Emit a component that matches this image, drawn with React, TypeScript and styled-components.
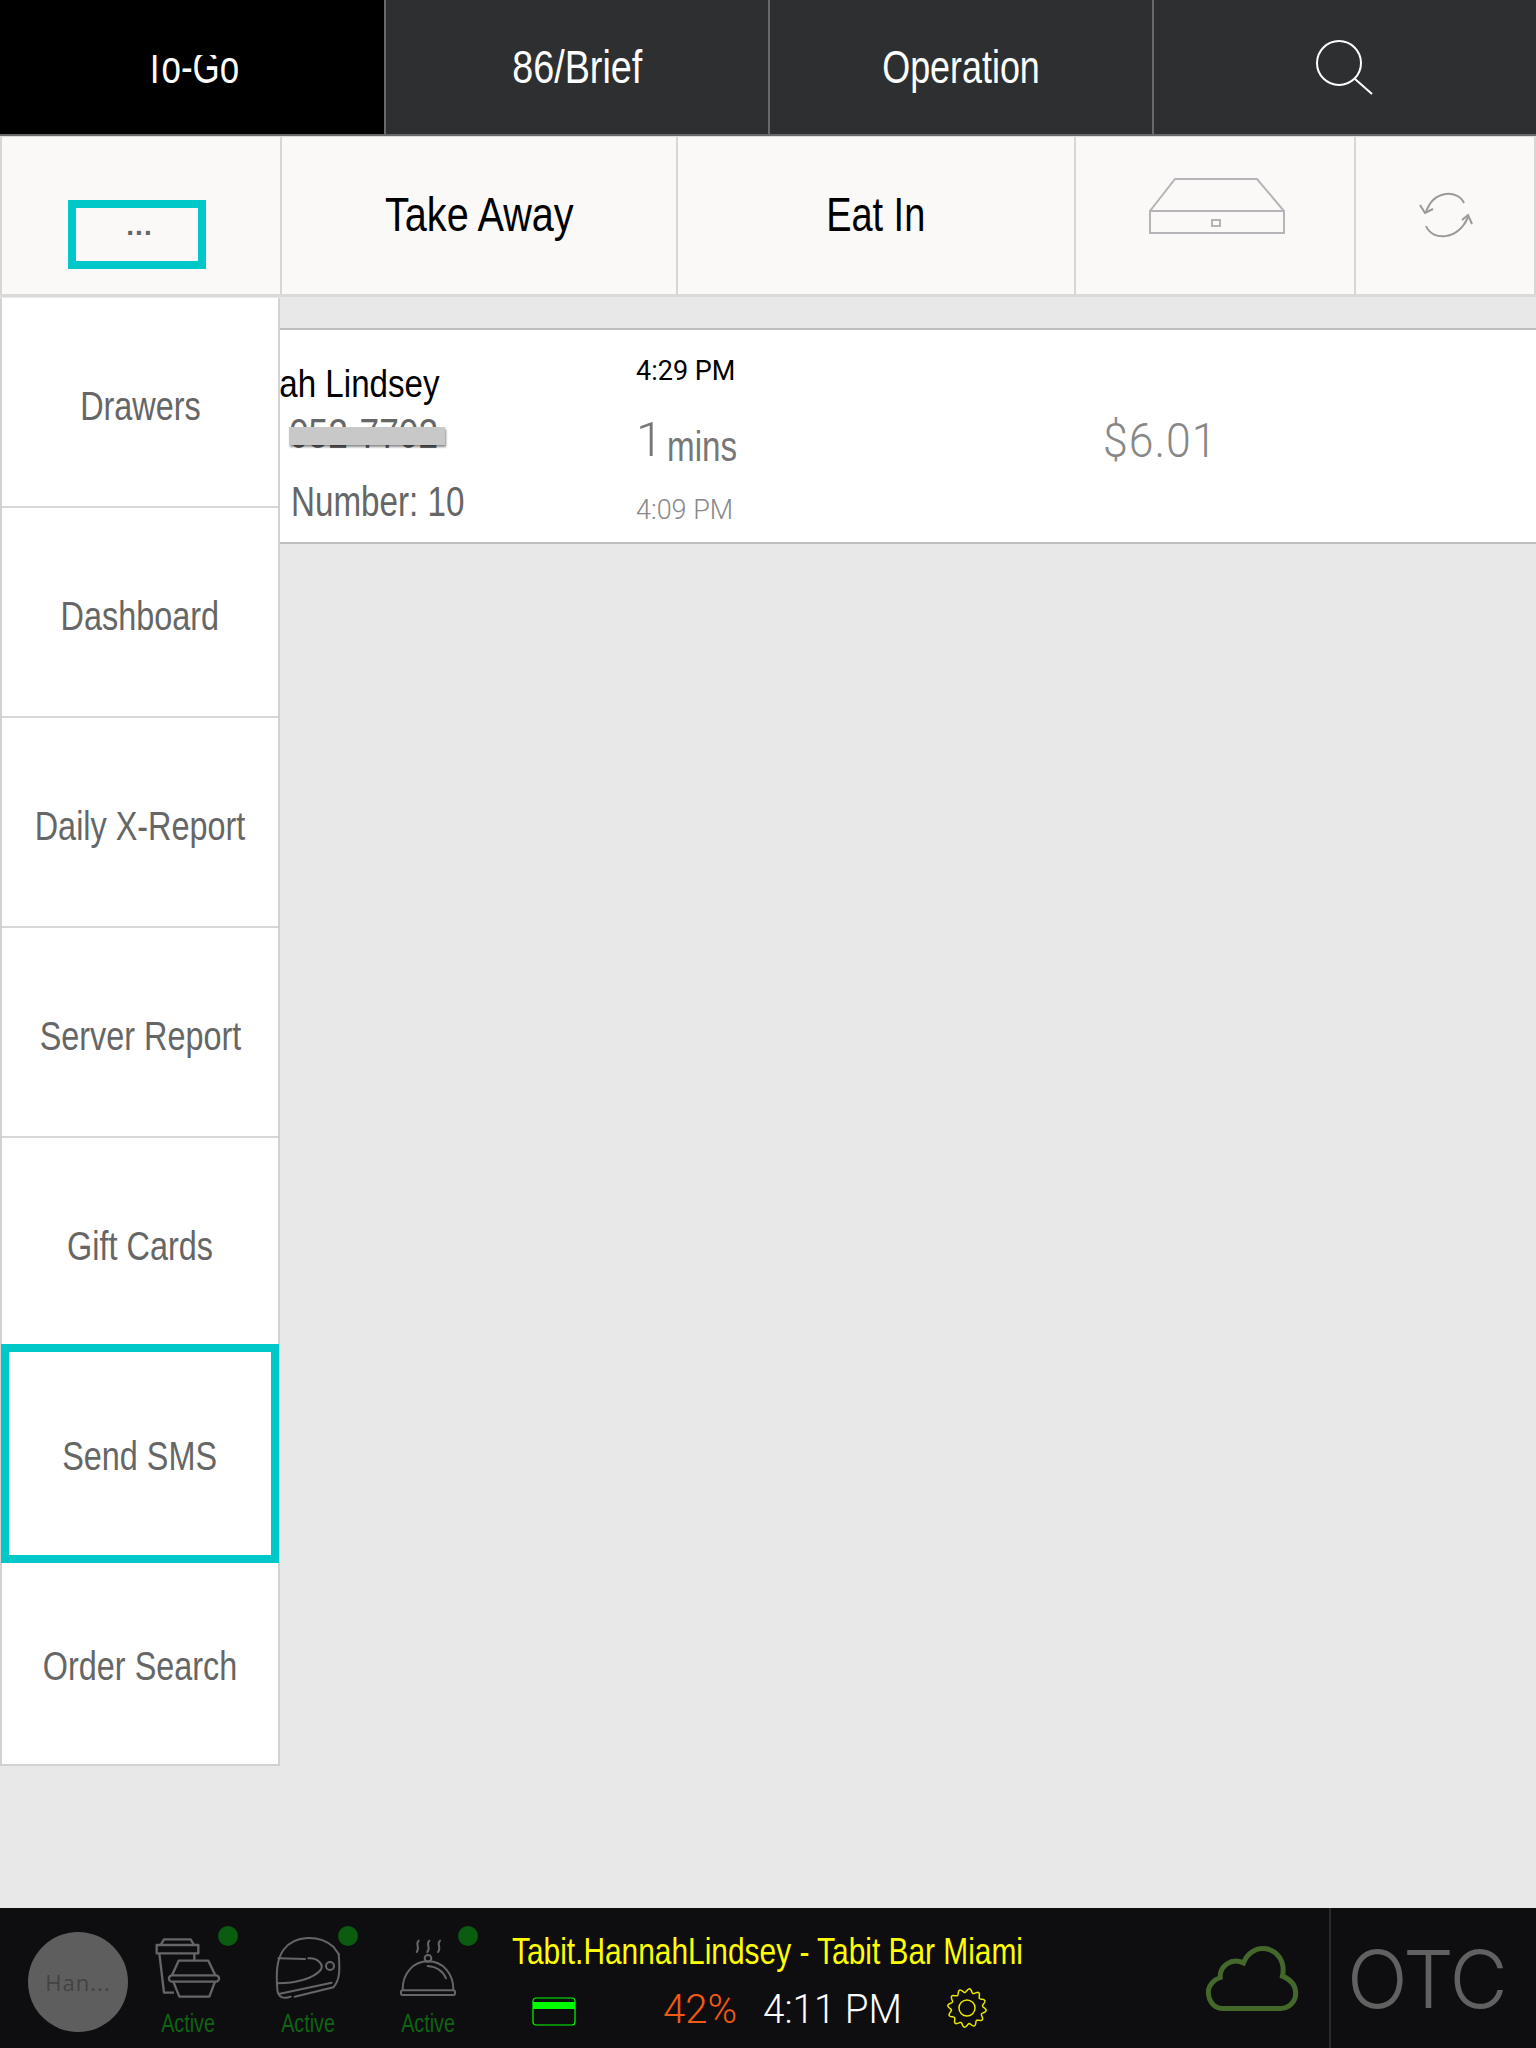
import React from "react";
import styled, { createGlobalStyle } from "styled-components";

const GlobalStyle = createGlobalStyle`
  html, body {
    margin: 0;
    padding: 0;
    background: #e8e8e8;
  }
`;

const Page = styled.div`
  width: 1536px;
  height: 2048px;
  display: flex;
  flex-direction: column;
  overflow: hidden;
  font-family: "Liberation Sans", Arial, sans-serif;
`;

// the reference uses a condensed face, so regular type gets squeezed
const Squeeze = styled.span<{ $sx?: number; $origin?: string; $clipTop?: number }>`
  display: inline-block;
  white-space: nowrap;
  transform: scaleX(${({ $sx }) => $sx ?? 0.79});
  transform-origin: ${({ $origin }) => $origin ?? "center"};
  ${({ $clipTop }) => ($clipTop ? `clip-path: inset(${$clipTop}px -4px 0 -4px);` : "")}
`;

const TopNav = styled.nav`
  height: 136px;
  flex: none;
  box-sizing: border-box;
  display: grid;
  grid-template-columns: 386px 384px 384px 382px;
  border-bottom: 2px solid #696969;
  background: #2e2f31;
`;

const NavTab = styled.div<{ $active?: boolean }>`
  display: flex;
  align-items: center;
  justify-content: center;
  box-sizing: border-box;
  border-right: 2px solid #696969;
  background: ${({ $active }) => ($active ? "#000" : "#2e2f31")};
  color: #fff;
  font-size: 46px;
  &:last-child {
    border-right: none;
  }
`;

const SearchSvg = styled.svg`
  margin-top: 4px;
`;

const Toolbar = styled.div`
  height: 161px;
  flex: none;
  box-sizing: border-box;
  display: grid;
  grid-template-columns: 282px 396px 398px 280px 180px;
  border-top: 1px solid #dcdcdc;
  border-bottom: 3px solid #dadada;
  background: #faf9f7;
`;

const ToolCell = styled.div`
  display: flex;
  align-items: center;
  justify-content: center;
  box-sizing: border-box;
  border-right: 2px solid #d6d6d6;
  padding-bottom: 2px;
  color: #000;
  font-size: 48px;
  &:first-child {
    border-left: 2px solid #d6d6d6;
    padding-bottom: 0;
  }
  &:last-child {
    border-right: 2px solid #d6d6d6;
  }
`;

const MoreBox = styled.div`
  width: 138px;
  height: 69px;
  margin: 38px 9px 0 0;
  box-sizing: border-box;
  border: 8px solid #00c8c8;
  display: flex;
  justify-content: center;
  color: #666;
  font-size: 28px;
  font-weight: bold;
  line-height: 28px;
  padding: 4px 0 0 6px;
  letter-spacing: 1px;
`;

const DrawerSvg = styled.svg`
  margin: 0 0 18px 4px;
`;

const RefreshSvg = styled.svg`
  margin-left: 2px;
`;

const Body = styled.main`
  position: relative;
  flex: 1;
  background: #e8e8e8;
  padding-top: 31px;
`;

const SideMenu = styled.aside`
  position: absolute;
  left: 0;
  top: 1px;
  width: 280px;
  box-sizing: border-box;
  border: 2px solid #d2d2d2;
  border-top: none;
  background: #fff;
`;

const MenuItem = styled.div<{ $active?: boolean }>`
  position: relative;
  height: 210px;
  box-sizing: border-box;
  display: flex;
  align-items: center;
  justify-content: center;
  padding-top: 8px;
  border-bottom: 2px solid ${({ $active }) => ($active ? "transparent" : "#d8d8d8")};
  color: #666;
  font-size: 40px;
  &:last-child {
    height: 206px;
    padding-top: 10px;
    border-bottom: none;
  }
  ${({ $active }) =>
    $active
      ? `&::after {
          content: "";
          position: absolute;
          left: -1px;
          right: -1px;
          top: -4px;
          bottom: -7px;
          border: 8px solid #00c8c8;
        }`
      : ""}
`;

const OrderRow = styled.section`
  height: 216px;
  box-sizing: border-box;
  display: flex;
  background: #fff;
  border-top: 2px solid #bdbdbd;
  border-bottom: 2px solid #bdbdbd;
`;

const CustomerCol = styled.div`
  width: 636px;
  flex: none;
  padding: 30px 0 0 200px;
  box-sizing: border-box;
`;

const CustomerName = styled.div`
  font-size: 39px;
  line-height: 48px;
  color: #000;
`;

const Phone = styled.div`
  position: relative;
  width: 156px;
  margin: 2px 0 0 89px;
  font-size: 42px;
  line-height: 48px;
  color: #666;
`;

const Redaction = styled.div`
  position: absolute;
  left: 0;
  right: 0;
  top: 17px;
  height: 18px;
  background: #c8c8c8;
  box-shadow: 1px 2px 2px rgba(0, 0, 0, 0.45);
`;

const TableNumber = styled.div`
  margin: 20px 0 0 91px;
  font-size: 42px;
  line-height: 48px;
  color: #666;
`;

const TimeCol = styled.div`
  width: 467px;
  flex: none;
  padding-top: 24px;
  font-family: Roboto, "Liberation Sans", sans-serif;
`;

const TimeLine = styled.div<{ $muted?: boolean }>`
  font-size: 27px;
  line-height: 34px;
  color: ${({ $muted }) => ($muted ? "#888" : "#000")};
  font-weight: ${({ $muted }) => ($muted ? 300 : 400)};
`;

const Elapsed = styled.div`
  display: flex;
  align-items: flex-start;
  margin-top: 27px;
  height: 78px;
  color: #777;
`;

const ElapsedNum = styled.span`
  width: 31px;
  font-size: 49px;
  line-height: 50px;
  font-weight: 300;
`;

const ElapsedUnit = styled.span`
  margin-top: 7px;
  font-family: "Liberation Sans", sans-serif;
  font-size: 42px;
  line-height: 50px;
`;

const Price = styled.div`
  padding-top: 84px;
  font-family: Roboto, "Liberation Sans", sans-serif;
  font-size: 48px;
  line-height: 54px;
  font-weight: 300;
  letter-spacing: 1px;
  color: #888;
`;

const BottomBar = styled.footer`
  height: 140px;
  flex: none;
  display: flex;
  background: #0e0d10;
  padding-left: 28px;
`;

const Avatar = styled.div`
  width: 100px;
  height: 100px;
  margin-top: 24px;
  flex: none;
  border-radius: 50%;
  background: #5e5e5e;
  color: #434343;
  font-family: "Open Sans", sans-serif;
  font-size: 22px;
  display: flex;
  align-items: center;
  justify-content: center;
  letter-spacing: 1px;
`;

const StatusItem = styled.div`
  position: relative;
  width: 120px;
  flex: none;
  box-sizing: border-box;
  padding-top: 27px;
  display: flex;
  flex-direction: column;
  align-items: center;
`;

const StatusDot = styled.span`
  position: absolute;
  left: 90px;
  top: 18px;
  width: 20px;
  height: 20px;
  border-radius: 50%;
  background: #0b5c0e;
`;

const StatusLabel = styled.div`
  margin-top: 9px;
  color: #0f6312;
  font-size: 25px;
  line-height: 30px;
`;

const Info = styled.div`
  margin-left: 24px;
  padding-top: 26px;
  width: 600px;
  flex: none;
`;

const UserLine = styled.div`
  color: #ffff00;
  font-size: 36px;
  line-height: 36px;
`;

const Meta = styled.div`
  display: flex;
  align-items: center;
  margin-top: 21px;
  height: 42px;
  padding-left: 20px;
  font-family: Roboto, "Liberation Sans", sans-serif;
  font-weight: 300;
  font-size: 40px;
`;

const Battery = styled.span`
  margin-left: 87px;
  width: 100px;
  padding-bottom: 5px;
  color: #f15a14;
`;

const Clock = styled.span`
  width: 184px;
  padding-bottom: 5px;
  color: #fff;
`;

const GearSvg = styled.svg`
  margin-top: -8px;
`;

const RightSide = styled.div`
  margin-left: auto;
  display: flex;
`;

const CloudWrap = styled.div`
  width: 123px;
  padding-top: 37px;
  box-sizing: border-box;
`;

const OtcBox = styled.div`
  width: 207px;
  box-sizing: border-box;
  border-left: 2px solid #2a2a2d;
  padding: 26px 0 0 16px;
  color: #616161;
  font-family: Inter, "Liberation Sans", sans-serif;
  font-weight: 300;
  font-size: 80px;
  line-height: 90px;
  letter-spacing: -2px;
`;

const menuItems = [
  "Drawers",
  "Dashboard",
  "Daily X-Report",
  "Server Report",
  "Gift Cards",
  "Send SMS",
  "Order Search",
];

const SearchIcon = () => (
  <SearchSvg width="58" height="58" viewBox="0 0 58 58" fill="none" stroke="#fff" strokeWidth="2">
    <circle cx="23" cy="23" r="22" />
    <path d="M39 39 L56 54" />
  </SearchSvg>
);

const DrawerIcon = () => (
  <DrawerSvg width="136" height="56" viewBox="0 0 136 56" fill="none" stroke="#b5b3b7" strokeWidth="2">
    <path d="M1 33 L26 1 H108 L135 33 Z" />
    <rect x="1" y="33" width="134" height="22" />
    <rect x="63" y="42" width="8" height="6" />
  </DrawerSvg>
);

const RefreshIcon = () => (
  <RefreshSvg width="56" height="48" viewBox="0 0 56 48" fill="none" stroke="#999" strokeWidth="2">
    <path d="M46 12 C40 -1 16 -2 8 21" />
    <path d="M2 14 L7 22 L15 18" />
    <path d="M8 35 C14 50 40 50 50 26" />
    <path d="M44 29 L50 24 L54 33" />
  </RefreshSvg>
);

const BagIcon = () => (
  <svg width="66" height="64" viewBox="465 135 198 192" fill="none" stroke="#666" strokeWidth="7" strokeLinejoin="round">
    <path d="M482 165 L492 148 H572 L582 165" />
    <rect x="470" y="165" width="125" height="25" />
    <path d="M478 190 L492 308 H522 M583 190 V210" />
    <path d="M516 256 L536 212 H625 L646 256" />
    <rect x="507" y="256" width="150" height="19" rx="9" />
    <path d="M520 275 L538 320 H628 L645 275" />
  </svg>
);

const HelmetIcon = () => (
  <svg width="66" height="64" viewBox="825 135 198 192" fill="none" stroke="#666" strokeWidth="6" strokeLinecap="round">
    <path d="M1016 192 L1000 170 C960 135 885 132 850 180 C830 210 828 245 832 300 C835 322 850 328 872 320" />
    <path d="M1016 192 C1020 240 1020 270 1000 292 L884 320" />
    <path d="M835 205 L915 207" />
    <path d="M925 205 C955 203 972 225 962 240 C940 265 890 280 832 280" />
    <path d="M836 312 L995 278" />
    <circle cx="990" cy="228" r="12" />
  </svg>
);

const ClocheIcon = () => (
  <svg width="66" height="64" viewBox="1185 135 198 192" fill="none" stroke="#666" strokeWidth="6" strokeLinecap="round">
    <path d="M1256 152 C1244 162 1262 174 1250 186" />
    <path d="M1288 152 C1276 162 1294 174 1282 186" />
    <path d="M1320 152 C1308 162 1326 174 1314 186" />
    <circle cx="1284" cy="205" r="10" />
    <path d="M1208 298 C1208 250 1240 214 1284 214 C1328 214 1360 250 1360 298" />
    <rect x="1203" y="301" width="162" height="14" rx="5" />
    <path d="M1283 228 C1310 230 1330 245 1338 265" />
  </svg>
);

const CardIcon = () => (
  <svg width="44" height="30" viewBox="0 0 44 30" fill="none">
    <rect x="1" y="1" width="42" height="27" rx="3" stroke="#00ff00" strokeWidth="1.2" />
    <rect x="1" y="5" width="42" height="7" fill="#00ff00" />
  </svg>
);

// wavy outline: twelve soft teeth round the ring
const gearPath = () => {
  const points: string[] = [];
  for (let i = 0; i < 240; i++) {
    const a = (i / 240) * Math.PI * 2;
    const r = 17.5 + 1.8 * Math.sin(a * 12);
    points.push(`${(20 + r * Math.cos(a)).toFixed(2)},${(20 + r * Math.sin(a)).toFixed(2)}`);
  }
  return `M${points.join(" L")} Z`;
};

const GearIcon = () => (
  <GearSvg width="40" height="40" viewBox="0 0 40 40" fill="none" stroke="#e8e800" strokeWidth="1.5">
    <path d={gearPath()} />
    <circle cx="20" cy="20" r="8" />
  </GearSvg>
);

const CloudIcon = () => (
  <svg width="93" height="67" viewBox="165 165 280 200" fill="none" stroke="#44682a" strokeWidth="15">
    <path d="M215 355 C185 355 172 328 172 305 C172 285 190 268 208 262 C205 230 240 200 278 218 C290 185 320 172 340 175 C380 178 405 215 395 258 C420 268 435 285 435 310 C435 335 415 355 390 355 Z" />
  </svg>
);

const statusIcons = [<BagIcon key="bag" />, <HelmetIcon key="helmet" />, <ClocheIcon key="cloche" />];

const App = () => {
  return (
    <Page>
      <GlobalStyle />
      <TopNav>
        <NavTab $active>
          <Squeeze $sx={0.76} $clipTop={15}>To-Go</Squeeze>
        </NavTab>
        <NavTab>
          <Squeeze $sx={0.82}>86/Brief</Squeeze>
        </NavTab>
        <NavTab>
          <Squeeze $sx={0.78}>Operation</Squeeze>
        </NavTab>
        <NavTab>
          <SearchIcon />
        </NavTab>
      </TopNav>
      <Toolbar>
        <ToolCell>
          <MoreBox>...</MoreBox>
        </ToolCell>
        <ToolCell>
          <Squeeze $sx={0.825}>Take Away</Squeeze>
        </ToolCell>
        <ToolCell>
          <Squeeze>Eat In</Squeeze>
        </ToolCell>
        <ToolCell>
          <DrawerIcon />
        </ToolCell>
        <ToolCell>
          <RefreshIcon />
        </ToolCell>
      </Toolbar>
      <Body>
        <OrderRow>
          <CustomerCol>
            <CustomerName>
              <Squeeze $sx={0.85} $origin="left">Hannah Lindsey</Squeeze>
            </CustomerName>
            <Phone>
              <Squeeze $sx={0.84} $origin="left">052-7702</Squeeze>
              <Redaction />
            </Phone>
            <TableNumber>
              <Squeeze $origin="left">Number: 10</Squeeze>
            </TableNumber>
          </CustomerCol>
          <TimeCol>
            <TimeLine>4:29 PM</TimeLine>
            <Elapsed>
              <ElapsedNum>1</ElapsedNum>
              <ElapsedUnit>
                <Squeeze $origin="left">mins</Squeeze>
              </ElapsedUnit>
            </Elapsed>
            <TimeLine $muted>4:09 PM</TimeLine>
          </TimeCol>
          <Price>
            <Squeeze $sx={0.93} $origin="left">$6.01</Squeeze>
          </Price>
        </OrderRow>
        <SideMenu>
          {menuItems.map((item) => (
            <MenuItem key={item} $active={item === "Send SMS"}>
              <Squeeze $sx={0.81}>{item}</Squeeze>
            </MenuItem>
          ))}
        </SideMenu>
      </Body>
      <BottomBar>
        <Avatar>Han...</Avatar>
        {statusIcons.map((icon) => (
          <StatusItem key={icon.key}>
            <StatusDot />
            {icon}
            <StatusLabel>
              <Squeeze>Active</Squeeze>
            </StatusLabel>
          </StatusItem>
        ))}
        <Info>
          <UserLine>
            <Squeeze $sx={0.83} $origin="left">Tabit.HannahLindsey - Tabit Bar Miami</Squeeze>
          </UserLine>
          <Meta>
            <CardIcon />
            <Battery>42%</Battery>
            <Clock>
              <Squeeze $sx={0.965} $origin="left">4:11 PM</Squeeze>
            </Clock>
            <GearIcon />
          </Meta>
        </Info>
        <RightSide>
          <CloudWrap>
            <CloudIcon />
          </CloudWrap>
          <OtcBox>OTC</OtcBox>
        </RightSide>
      </BottomBar>
    </Page>
  );
};

export default App;
